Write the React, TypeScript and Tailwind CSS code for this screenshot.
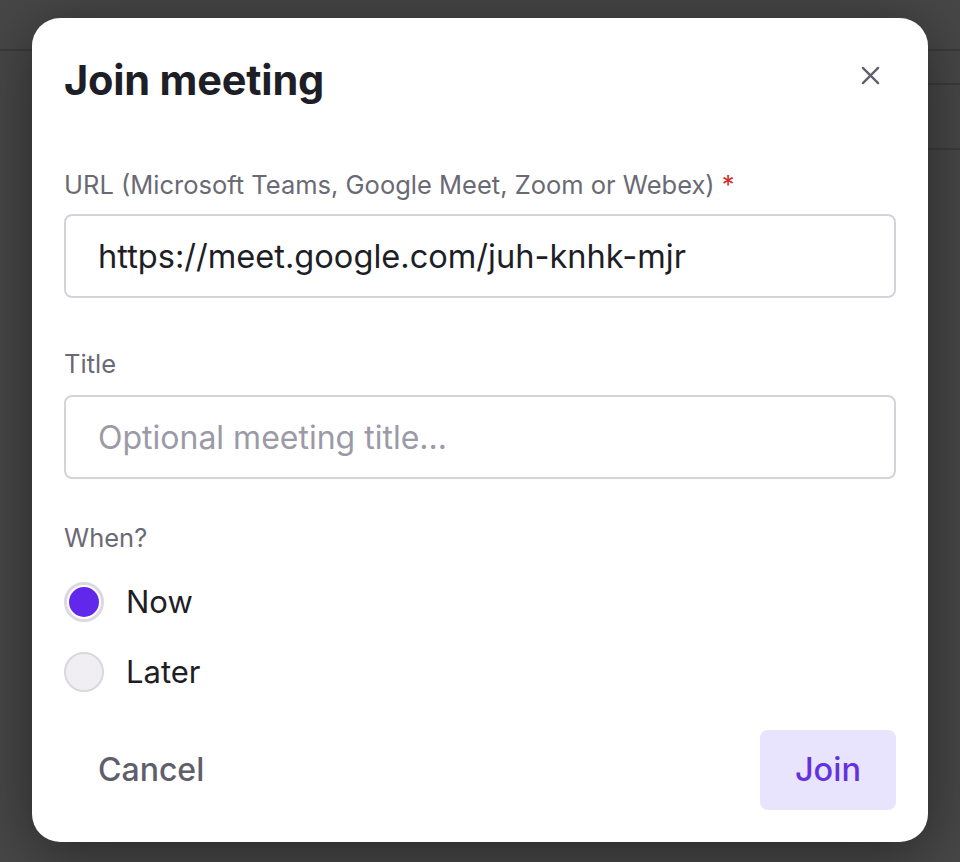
import { useState } from "react";

const font = { fontFamily: "Inter, 'Noto Sans', sans-serif" };

function Radio({ checked, label, onClick }: { checked: boolean; label: string; onClick: () => void }) {
  return (
    <button type="button" onClick={onClick} className="flex items-center gap-[22px] text-left">
      <span
        className={
          checked
            ? "flex h-10 w-10 items-center justify-center rounded-full border-[3px] border-[#dcd8e4] bg-white"
            : "h-10 w-10 rounded-full border-2 border-[#dad8de] bg-[#f0eef3]"
        }
      >
        {checked && <span className="h-[30px] w-[30px] rounded-full bg-[#6127ea]" />}
      </span>
      <span className="text-[31px] leading-[40px] text-[#1e1e26]">{label}</span>
    </button>
  );
}

export default function App() {
  const [when, setWhen] = useState<"now" | "later">("now");
  const [url, setUrl] = useState("https://meet.google.com/juh-knhk-mjr");
  const [title, setTitle] = useState("");

  return (
    <div className="relative h-[862px] w-[960px] overflow-hidden bg-[#474747]" style={font}>
      {/* page behind the backdrop */}
      <div className="h-[51px] border-b-2 border-[#3b3b3b]" />
      <div className="flex">
        <div className="flex-1" />
        <div className="w-[120px]">
          <div className="h-[34px] border-b-2 border-[#3b3b3b]" />
          <div className="h-[65px] border-b-2 border-[#3b3b3b]" />
        </div>
      </div>

      <div className="absolute inset-0 flex items-start justify-center pt-[18px]">
        <div className="flex h-[824px] w-[896px] flex-col rounded-[28px] bg-white px-8 pt-[40px] pb-8 shadow-[0_10px_60px_rgba(0,0,0,0.45)]">
          <div className="flex items-start justify-between">
            <h1 className="text-[41.5px] font-bold leading-[44px] tracking-[-0.2px] text-[#1e1e26]">Join meeting</h1>
            <button type="button" className="mt-[8px] mr-[16px] text-[#5f5e6b]">
              <svg width="19" height="19" viewBox="0 0 20 20" fill="none" stroke="currentColor" strokeWidth="2.4" strokeLinecap="round">
                <path d="M2 2L18 18M18 2L2 18" />
              </svg>
            </button>
          </div>

          <label className="mt-[69px] block text-[25.5px] leading-[28px] text-[#6a6a75]">
            URL (Microsoft Teams, Google Meet, Zoom or Webex) <span className="text-[#d42f2f]">*</span>
          </label>
          <input
            value={url}
            onChange={(e) => setUrl(e.target.value)}
            className="mt-[15px] h-[84px] w-full rounded-[8px] border-2 border-[#d3d3da] px-[32px] text-[32.6px] text-[#1e1e26] outline-none"
          />

          <label className="mt-[52px] block text-[25.5px] leading-[28px] text-[#6a6a75]">Title</label>
          <input
            value={title}
            onChange={(e) => setTitle(e.target.value)}
            placeholder="Optional meeting title..."
            className="mt-[17px] h-[84px] w-full rounded-[8px] border-2 border-[#d3d3da] px-[32px] text-[32px] text-[#1e1e26] outline-none placeholder:text-[#9b9aa6]"
          />

          <div className="mt-[45px] text-[25.5px] leading-[28px] text-[#6a6a75]">When?</div>
          <div className="mt-[30px] flex flex-col gap-[30px]">
            <Radio checked={when === "now"} label="Now" onClick={() => setWhen("now")} />
            <Radio checked={when === "later"} label="Later" onClick={() => setWhen("later")} />
          </div>

          <div className="mt-auto flex items-center justify-between">
            <button type="button" className="h-20 rounded-[8px] px-[34px] text-[32px] font-medium text-[#5f5e6b]">
              Cancel
            </button>
            <button type="button" className="h-20 rounded-[8px] bg-[#e8e4fd] px-[35px] text-[32.5px] font-medium text-[#6331e0]">
              Join
            </button>
          </div>
        </div>
      </div>
    </div>
  );
}
